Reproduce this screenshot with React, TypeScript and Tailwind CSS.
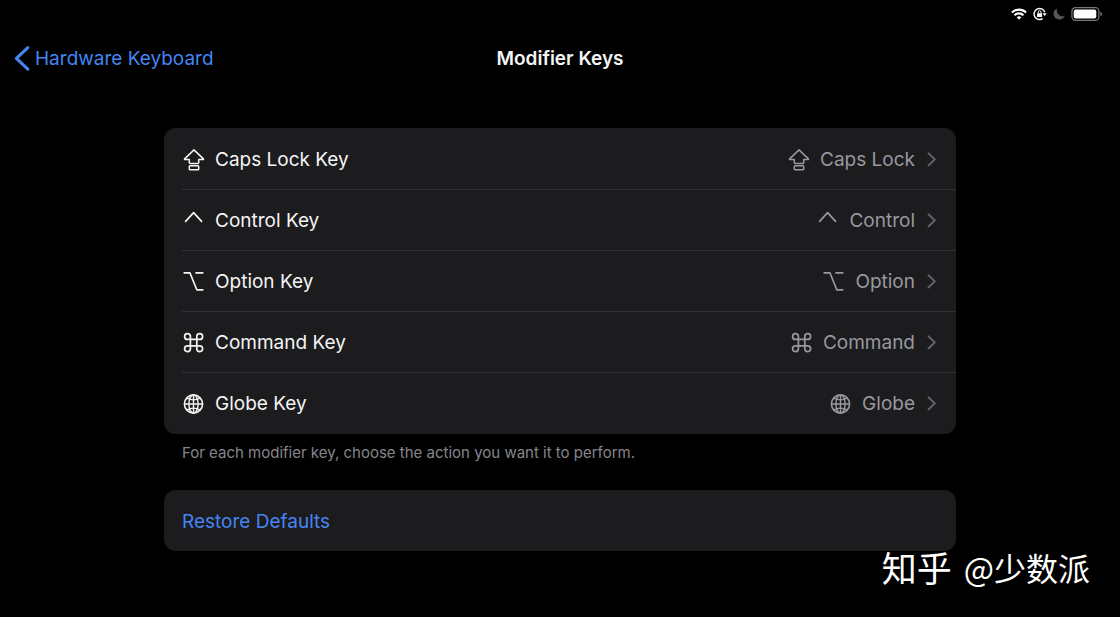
import React from 'react';

interface IconProps {
  className?: string;
}

interface ModifierKey {
  id: string;
  label: string;
  action: string;
  icon: (props: IconProps) => React.ReactElement;
}

function CapsLockIcon({ className }: IconProps) {
  return (
    <svg viewBox="0 0 22 22" fill="none" stroke="currentColor" strokeWidth="1.5" strokeLinejoin="round" className={className} aria-hidden="true">
      <path d="M11 0.9 L20.4 9.9 Q20.8 10.6 20 10.6 H15.7 V13.6 Q15.7 14.5 14.8 14.5 H7.2 Q6.3 14.5 6.3 13.6 V10.6 H2 Q1.2 10.6 1.6 9.9 Z" />
      <rect x="6.3" y="16.8" width="9.4" height="3.9" rx="0.8" />
    </svg>
  );
}

function ControlIcon({ className }: IconProps) {
  return (
    <svg viewBox="0 0 22 22" fill="none" stroke="currentColor" strokeWidth="1.7" strokeLinecap="round" strokeLinejoin="round" className={className} aria-hidden="true">
      <path d="M2.6 11.4 L10.6 2.6 L18.6 11.4" />
    </svg>
  );
}

function OptionIcon({ className }: IconProps) {
  return (
    <svg viewBox="0 0 22 22" fill="none" stroke="currentColor" strokeWidth="1.7" strokeLinecap="round" strokeLinejoin="round" className={className} aria-hidden="true">
      <path d="M1.2 1.8 H6.9 L13.8 18.8 H19.8" />
      <path d="M13 1.8 H19.8" />
    </svg>
  );
}

function CommandIcon({ className }: IconProps) {
  return (
    <svg viewBox="0 0 22 22" fill="none" stroke="currentColor" strokeWidth="1.7" className={className} aria-hidden="true">
      <path d="M7.4 7.4 H13.8 V13.8 H7.4 Z" />
      <path d="M7.4 7.4 H4.6 A2.9 2.9 0 1 1 7.4 4.4 Z" />
      <path d="M13.8 7.4 H16.6 A2.9 2.9 0 1 0 13.8 4.4 Z" />
      <path d="M7.4 13.8 H4.6 A2.9 2.9 0 1 0 7.4 16.8 Z" />
      <path d="M13.8 13.8 H16.6 A2.9 2.9 0 1 1 13.8 16.8 Z" />
    </svg>
  );
}

function GlobeIcon({ className }: IconProps) {
  return (
    <svg viewBox="0 0 22 22" fill="none" stroke="currentColor" strokeWidth="1.4" className={className} aria-hidden="true">
      <circle cx="10.5" cy="11" r="9.1" strokeWidth="1.6" />
      <ellipse cx="10.5" cy="11" rx="4.6" ry="9" />
      <path d="M10.5 2 V20 M1.5 11 H19.5" />
      <path d="M3.9 5.2 Q10.5 8.6 17.1 5.2 M3.9 16.8 Q10.5 13.4 17.1 16.8" />
    </svg>
  );
}

function ChevronIcon({ className }: IconProps) {
  return (
    <svg viewBox="0 0 10 16" fill="none" stroke="currentColor" strokeWidth="2" strokeLinecap="round" strokeLinejoin="round" className={className} aria-hidden="true">
      <path d="M1.6 1.4 L7.8 7.4 L1.6 13.4" />
    </svg>
  );
}

const KEYS: ModifierKey[] = [
  { id: 'caps-lock', label: 'Caps Lock Key', action: 'Caps Lock', icon: CapsLockIcon },
  { id: 'control', label: 'Control Key', action: 'Control', icon: ControlIcon },
  { id: 'option', label: 'Option Key', action: 'Option', icon: OptionIcon },
  { id: 'command', label: 'Command Key', action: 'Command', icon: CommandIcon },
  { id: 'globe', label: 'Globe Key', action: 'Globe', icon: GlobeIcon },
];

function StatusBar() {
  return (
    <div className="flex h-7 items-center justify-end gap-1.5 pr-[17px] text-white">
      <svg viewBox="0 0 16 12" className="h-3 w-4" fill="none" stroke="currentColor" strokeWidth="2.1" aria-hidden="true">
        <path d="M0.9 4.5 A10.2 10.2 0 0 1 15.1 4.5" />
        <path d="M3.5 7.2 A6.4 6.4 0 0 1 12.5 7.2" />
        <path d="M8 11.7 L5.7 9.3 A3.3 3.3 0 0 1 10.3 9.3 Z" fill="currentColor" stroke="none" />
      </svg>
      {/* rotation lock */}
      <svg viewBox="0 0 14 14" className="h-3.5 w-3.5" fill="none" stroke="currentColor" strokeWidth="1.4" aria-hidden="true">
        <path d="M9.6 11.6 A5.5 5.5 0 1 1 11.8 5.2" />
        <path d="M9.4 6.2 H13.6 L11.7 9 Z" fill="currentColor" stroke="none" />
        <rect x="4.1" y="6.2" width="5" height="3.8" rx="0.5" fill="currentColor" stroke="none" />
        <path d="M5.2 6.6 V5.1 A1.4 1.4 0 0 1 8 5.1 V6.6" strokeWidth="1" />
      </svg>
      <svg viewBox="0 0 12 12" className="h-3 w-3 text-[#55555a]" fill="currentColor" aria-hidden="true">
        <path d="M4.2 0.4 A5.8 5.8 0 1 0 11.7 8 A6 6 0 0 1 4.2 0.4 Z" />
      </svg>
      <svg viewBox="0 0 32 14" className="h-3.5 w-8" fill="none" aria-hidden="true">
        <rect x="0.9" y="0.7" width="27" height="12.6" rx="3.6" stroke="#77777a" strokeWidth="1.2" />
        <rect x="2.7" y="2.4" width="22.6" height="9.2" rx="2" fill="currentColor" />
        <path d="M29.4 4.8 Q31.2 5.5 31.2 7 Q31.2 8.5 29.4 9.2 Z" fill="#77777a" />
      </svg>
    </div>
  );
}

function KeyRow({ item, first }: { item: ModifierKey; first: boolean }) {
  const Icon = item.icon;
  return (
    <li className="pl-[18px]">
      <button
        type="button"
        className={`flex h-[61px] w-full items-center border-t pt-0.5 pr-[19px] pl-px text-left ${first ? 'border-transparent' : 'border-[#303032]'}`}
      >
        <Icon className="h-[22px] w-[22px] shrink-0 text-[#f4f4f5]" />
        <span className="ml-2.5 flex-1 text-[#f4f4f5]">{item.label}</span>
        <Icon className="h-[22px] w-[22px] shrink-0 text-[#98989f]" />
        <span className="ml-2.5 text-[#98989f]">{item.action}</span>
        <ChevronIcon className="ml-3 h-4 w-2.5 text-[#66666a]" />
      </button>
    </li>
  );
}

export default function App() {
  return (
    <div className="relative min-h-screen bg-black font-['Inter',sans-serif] text-[19px] leading-6">
      <StatusBar />

      <header className="grid h-[60px] grid-cols-[1fr_auto_1fr] items-center px-3.5 pt-px">
        <a href="#hardware-keyboard" className="flex items-center gap-[5px] text-[#4485f2]">
          <svg viewBox="0 0 16 26" className="h-[26px] w-4" fill="none" stroke="currentColor" strokeWidth="3" strokeLinecap="round" strokeLinejoin="round" aria-hidden="true">
            <path d="M13.8 1.6 L2.4 12.4 L13.8 23.2" />
          </svg>
          Hardware Keyboard
        </a>
        <h1 className="font-semibold text-[#f4f4f5]">Modifier Keys</h1>
      </header>

      <main className="px-4 pt-10 pb-16 md:px-[164px]">
        <ul className="rounded-xl bg-[#1c1c1e] pb-px">
          {KEYS.map((item, index) => (
            <KeyRow key={item.id} item={item} first={index === 0} />
          ))}
        </ul>
        <p className="mt-[7px] px-[18px] text-[15px] text-[#86868b]">
          For each modifier key, choose the action you want it to perform.
        </p>
        <button type="button" className="mt-[25px] h-[61px] w-full rounded-xl bg-[#1c1c1e] px-[18px] pt-0.5 text-left text-[#4485f2]">
          Restore Defaults
        </button>
      </main>

      <div className="absolute right-[30px] bottom-[26px] flex items-center gap-3 font-['Noto_Sans_CJK_SC',sans-serif] text-white">
        <span className="text-[35px] leading-12">知乎</span>
        <span className="text-[32px] leading-12">@少数派</span>
      </div>
    </div>
  );
}
